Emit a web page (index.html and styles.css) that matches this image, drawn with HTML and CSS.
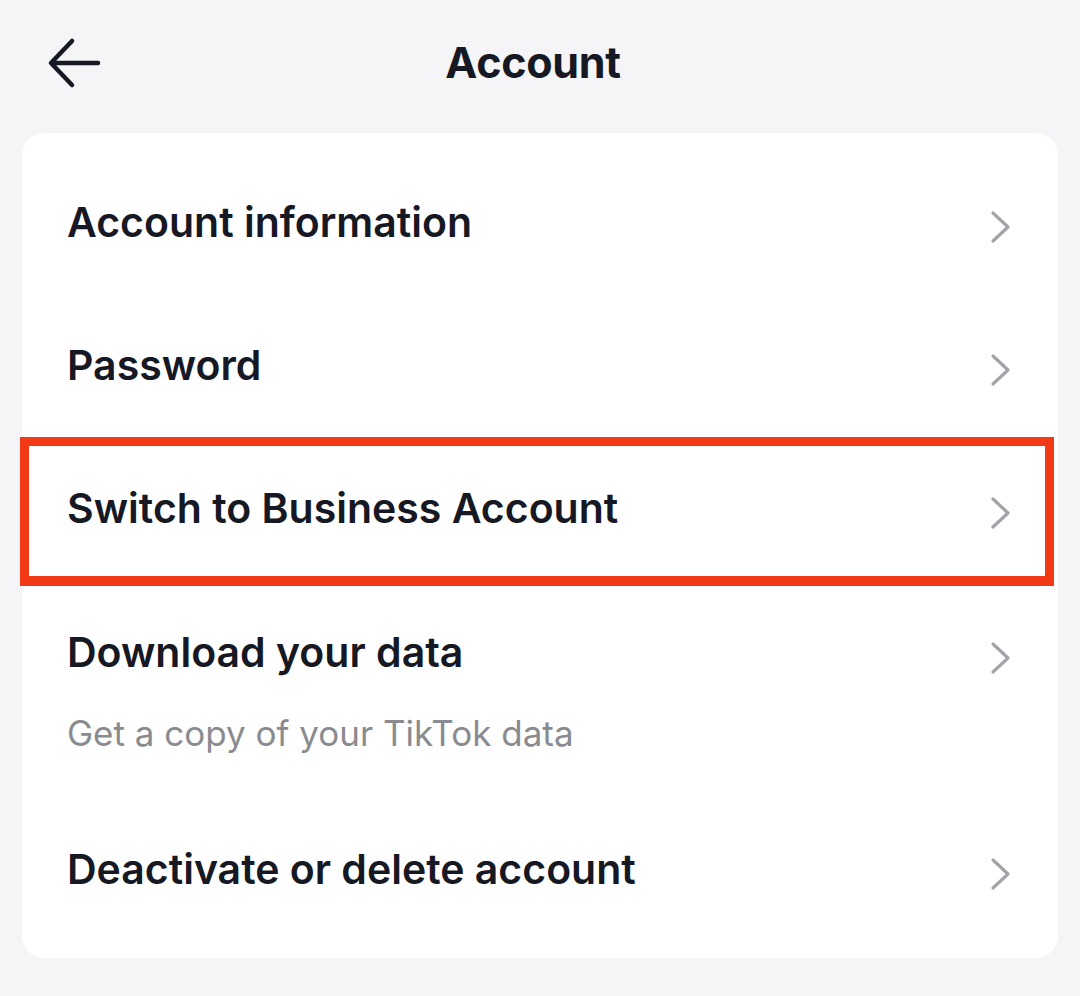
FILE: index.html
```html
<!DOCTYPE html>
<html>
  <head>
    <meta http-equiv="Content-Type" content="text/html;charset=UTF-8" />
    <meta name="viewport" content="width=device-width, initial-scale=1.0" />
    <title>Account</title>
    <link rel="stylesheet" href="styles.css">
  </head>
  <body>
    <div class="header">
      <svg class="back" width="56" height="52" viewBox="0 0 56 52">
        <path d="M52 26H6M26 4L5 26l21 22" fill="none" stroke="#161823" stroke-width="4.5" stroke-linecap="round" stroke-linejoin="round" />
      </svg>
      <h1>Account</h1>
    </div>

    <div class="card">
      <div class="row">
        <div class="row_title">Account information</div>
        <svg class="chevron" viewBox="0 0 22 34"><path d="M3 3l15 14L3 31" /></svg>
      </div>
      <div class="row">
        <div class="row_title">Password</div>
        <svg class="chevron" viewBox="0 0 22 34"><path d="M3 3l15 14L3 31" /></svg>
      </div>
      <div class="row _highlighted">
        <div class="row_title">Switch to Business Account</div>
        <svg class="chevron" viewBox="0 0 22 34"><path d="M3 3l15 14L3 31" /></svg>
      </div>
      <div class="row _with_sub">
        <div>
          <div class="row_title">Download your data</div>
          <div class="row_sub">Get a copy of your TikTok data</div>
        </div>
        <svg class="chevron" viewBox="0 0 22 34"><path d="M3 3l15 14L3 31" /></svg>
      </div>
      <div class="row">
        <div class="row_title">Deactivate or delete account</div>
        <svg class="chevron" viewBox="0 0 22 34"><path d="M3 3l15 14L3 31" /></svg>
      </div>
    </div>
  </body>
</html>
```

FILE: styles.css
```css
html {
  font-family: "Inter", "Open Sans", sans-serif;
}
body {
  margin: 0;
  width: 1080px;
  height: 996px;
  background-color: #f5f5f7;
  color: #161823;
  overflow: hidden;
}
.header {
  position: relative;
  height: 133px;
  display: flex;
  align-items: center;
  justify-content: center;
  padding-bottom: 10px;
  box-sizing: border-box;
}
.back {
  position: absolute;
  left: 46px;
  top: 37px;
}
h1 {
  margin: 0;
  font-size: 43px;
  font-weight: 700;
  letter-spacing: -0.3px;
  transform: translateX(-7px);
}
.card {
  margin: 0 22px;
  background-color: #fff;
  border-radius: 22px;
  padding: 17px 0 18px;
}
.row {
  position: relative;
  height: 143px;
  display: flex;
  align-items: center;
  justify-content: space-between;
  padding: 0 46px 0 45px;
}
.row_title {
  font-size: 41px;
  font-weight: 600;
}
.row_sub {
  margin-top: 35px;
  font-size: 35px;
  font-weight: 400;
  color: #8a8b91;
}
.row._with_sub {
  height: 218px;
  align-items: flex-start;
  padding-top: 48px;
  box-sizing: border-box;
}
.row._with_sub .chevron {
  margin-top: 14px;
}
.row._highlighted::after {
  content: "";
  position: absolute;
  left: -2px;
  right: 4px;
  top: 1px;
  bottom: -7px;
  border: 9px solid #f23a16;
  border-bottom-width: 10px;
  pointer-events: none;
}
.chevron {
  width: 22px;
  height: 34px;
  margin-top: 10px;
  fill: none;
  stroke: #a3a4a9;
  stroke-width: 3.2;
  stroke-linecap: round;
  stroke-linejoin: round;
}
```
